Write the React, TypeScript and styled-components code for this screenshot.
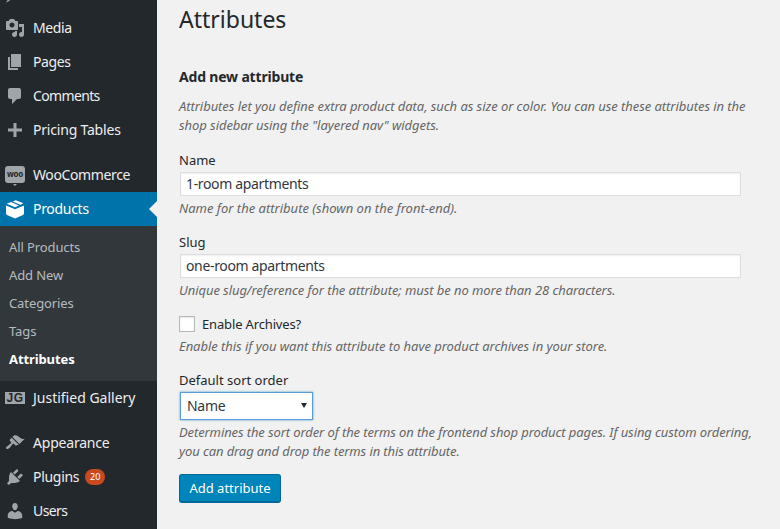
import React from "react";
import styled, { createGlobalStyle } from "styled-components";

const Global = createGlobalStyle`
  html, body { margin: 0; padding: 0; height: 100%; overflow: hidden; background: #f1f1f1; }
  body { font-family: "Noto Sans", sans-serif; font-size: 13px; color: #444; }
  * { box-sizing: border-box; }
`;

const Page = styled.div`
  display: flex;
  width: 780px;
  height: 529px;
  overflow: hidden;
`;
const Sidebar = styled.nav`
  flex: 0 0 157px;
  background: #23282d;
  height: 529px;
  overflow: hidden;
`;
const Menu = styled.ul`
  list-style: none;
  margin: -23px 0 0;
  padding: 0;
`;
const Item = styled.li<{ $active?: boolean; $gap?: boolean; $track?: number }>`
  position: relative;
  display: flex;
  align-items: center;
  height: 34px;
  margin-top: ${(p) => (p.$gap ? "11px" : "0")};
  background: ${(p) => (p.$active ? "#0073aa" : "transparent")};
  color: ${(p) => (p.$active ? "#fff" : "#eee")};
  font-size: 14px;
  line-height: 18px;
  letter-spacing: ${(p) => p.$track ?? -0.3}px;
`;
const IconSlot = styled.span<{ $active?: boolean }>`
  flex: 0 0 33px;
  display: flex;
  justify-content: center;
  padding-right: 3px;
  letter-spacing: 0;
  color: ${(p) => (p.$active ? "#fff" : "#a0a5aa")};
`;
const Pointer = styled.span`
  position: absolute;
  right: 0;
  top: 9px;
  border: 8px solid transparent;
  border-right-color: #f1f1f1;
  border-left-width: 0;
`;
const Badge = styled.span`
  display: inline-block;
  margin-left: 6px;
  min-width: 20px;
  height: 16px;
  padding: 0 4px;
  border-radius: 8px;
  background: #ca4a1f;
  color: #fff;
  font-size: 9px;
  line-height: 16px;
  letter-spacing: 0;
  text-align: center;
`;
const Sub = styled.ul`
  list-style: none;
  margin: 0;
  padding: 7px 0 8px;
  background: #32373c;
`;
const SubItem = styled.li<{ $current?: boolean }>`
  height: 28px;
  padding-left: 9px;
  font-size: 13px;
  line-height: 28px;
  letter-spacing: -0.1px;
  color: ${(p) => (p.$current ? "#fff" : "rgba(240,245,250,.7)")};
  font-weight: ${(p) => (p.$current ? 700 : 400)};
`;
const WooBubble = styled.span`
  position: relative;
  width: 20px;
  height: 17px;
  margin-top: -2px;
  border-radius: 3px;
  background: #a0a5aa;
  color: #23282d;
  font-size: 8px;
  font-weight: 700;
  line-height: 16px;
  text-align: center;
  letter-spacing: -0.3px;
  &::after {
    content: "";
    position: absolute;
    left: 8px;
    bottom: -3px;
    border: 2px solid transparent;
    border-top-color: #a0a5aa;
    border-bottom-width: 0;
  }
`;
const JgBox = styled.span`
  width: 20px;
  height: 12px;
  background: #a0a5aa;
  color: #23282d;
  font-family: "Liberation Sans", sans-serif;
  font-size: 12px;
  font-weight: 700;
  line-height: 12px;
  letter-spacing: 0.5px;
  text-align: center;
`;

const Main = styled.main`
  flex: 1;
  padding: 0 24px 0 22px;
  min-width: 0;
`;
const Title = styled.h1`
  margin: 5px 0 0;
  font-size: 23px;
  font-weight: 400;
  line-height: 29px;
  color: #23282d;
`;
const Section = styled.h2`
  margin: 33px 0 0;
  font-size: 14px;
  font-weight: 700;
  line-height: 19px;
  letter-spacing: -0.18px;
  color: #23282d;
`;
const Intro = styled.p`
  margin: 11px 0 0;
  font-style: italic;
  font-size: 13px;
  line-height: 19px;
  letter-spacing: -0.06px;
  color: #666;
`;
const Field = styled.div<{ $top: number }>`
  margin-top: ${(p) => p.$top}px;
`;
const Label = styled.label`
  display: block;
  height: 18px;
  font-size: 13px;
  line-height: 18px;
  color: #23282d;
`;
const TextInput = styled.input`
  display: block;
  width: 561px;
  height: 24px;
  margin: 3px 0 0 1px;
  padding: 0 5px 2px;
  border: 1px solid #ddd;
  background: #fff;
  color: #32373c;
  font: 14px/20px "Noto Sans", sans-serif;
  letter-spacing: -0.35px;
  box-shadow: inset 0 1px 2px rgba(0, 0, 0, 0.07);
  outline: 0;
`;
const Hint = styled.p<{ $track: number }>`
  margin: 3px 0 0;
  font-style: italic;
  font-size: 13px;
  line-height: 19px;
  letter-spacing: ${(p) => p.$track}px;
  color: #666;
`;
const CheckRow = styled.label`
  display: flex;
  align-items: center;
  gap: 7px;
  height: 18px;
  margin-bottom: 4px;
  font-size: 13px;
  letter-spacing: -0.15px;
  color: #23282d;
`;
const Check = styled.input`
  appearance: none;
  width: 16px;
  height: 16px;
  margin: 0;
  border: 1px solid #b4b9be;
  background: #fff;
  box-shadow: inset 0 1px 2px rgba(0, 0, 0, 0.1);
`;
const SelectWrap = styled.div`
  position: relative;
  width: 133px;
  margin: 3px 0 2px 1px;
  &::after {
    content: "";
    position: absolute;
    right: 6px;
    top: 11px;
    border-style: solid;
    border-width: 5px 3px 0;
    border-color: #23282d transparent transparent;
    pointer-events: none;
  }
`;
const Select = styled.select`
  appearance: none;
  display: block;
  width: 133px;
  height: 28px;
  padding: 2px 6px;
  border: 1px solid #5b9dd9;
  border-radius: 0;
  background: #fff;
  color: #32373c;
  font: 14px/20px "Noto Sans", sans-serif;
  letter-spacing: -0.3px;
  box-shadow: 0 0 2px rgba(30, 140, 190, 0.8);
  outline: 0;
`;
const Button = styled.button`
  display: block;
  width: 102px;
  height: 29px;
  margin: 13px 0 0;
  padding: 0;
  border: 1px solid #006799;
  border-bottom-width: 2px;
  border-radius: 3px;
  background: #0085ba;
  color: #fff;
  font: 13px/26px "Noto Sans", sans-serif;
`;

const Dash = ({ d, size = 20 }: { d: string; size?: number }) => (
  <svg width={size} height={size} viewBox="0 0 20 20" fill="currentColor" fillRule="evenodd">
    <path d={d} />
  </svg>
);

const icons = {
  post: "M10.44 3.02l1.82-1.82 6.36 6.35-1.83 1.82c-1.05-.68-2.48-.57-3.41.36l-.75.75c-.92.93-1.04 2.35-.35 3.41l-1.83 1.82-2.41-2.41-2.8 2.79c-.42.42-3.38 2.71-3.8 2.29s1.86-3.39 2.28-3.81l2.79-2.79L4.1 9.36l1.83-1.82c1.05.69 2.48.57 3.4-.36l.75-.75c.93-.92 1.05-2.35.36-3.41z",
  media: "M13 11V4c0-.55-.45-1-1-1h-1.67L9 1H5L3.67 3H2c-.55 0-1 .45-1 1v7c0 .55.45 1 1 1h10c.55 0 1-.45 1-1zM7 4.5c1.38 0 2.5 1.12 2.5 2.5S8.38 9.5 7 9.5 4.5 8.38 4.5 7 5.62 4.5 7 4.5zM14 6h5v10.5c0 1.38-1.12 2.5-2.5 2.5S14 17.88 14 16.5s1.12-2.5 2.5-2.5c.17 0 .34.02.5.05V9h-3V6zm-4 8.05V13h2v3.5c0 1.38-1.12 2.5-2.5 2.5S7 17.88 7 16.5 8.12 14 9.5 14c.17 0 .34.02.5.05z",
  page: "M6 15V2h10v13H6zm-1 1h8v2H3V5h2v11z",
  comments: "M5 2h9c1.1 0 2 .9 2 2v7c0 1.1-.9 2-2 2h-2l-5 5v-5H5c-1.1 0-2-.9-2-2V4c0-1.1.9-2 2-2z",
  plus: "M17 8.5v3h-5.5V17h-3v-5.5H3v-3h5.5V3h3v5.5z",
  box: "M10.8 1.2l7.6 3-3 1.5-7.8-3.2zM6.1 3.1l7.8 3.3L10 8.3 1.7 4.7zM1 6.4l9 3.8 9-3.8v8.2c0 .6-.4 1.1-1 1.4l-8 3.6L2 16c-.6-.3-1-.8-1-1.4z",
  appearance: "M14.48 11.06L7.41 3.99l1.5-1.5c.5-.56 2.3-.47 3.51.32 1.21.8 1.43 1.28 2.91 2.1 1.18.64 2.45 1.26 4.45.85zm-.71.71L6.7 4.7 4.93 6.47c-.39.39-.39 1.02 0 1.41l1.06 1.06c.39.39.39 1.03 0 1.42-.6.6-1.43 1.11-2.21 1.69-.35.26-.7.53-1.01.84C1.43 13.23.4 14.67 1.4 15.67c.99 1 2.44-.03 3.78-1.37.31-.31.58-.66.85-1.02.57-.78 1.08-1.61 1.69-2.21.39-.39 1.02-.39 1.41 0l1.06 1.06c.39.39 1.02.39 1.41 0z",
  plugins: "M13.11 4.36L9.87 7.6 8 5.73l3.24-3.24c.35-.34 1.05-.2 1.56.32.52.51.66 1.21.31 1.55zm-8 1.77l.91-1.12 9.01 9.01-1.19.84c-.71.71-2.63 1.16-3.82 1.16H6.14L4.9 17.26c-.59.59-1.54.59-2.12 0-.59-.58-.59-1.53 0-2.12l1.24-1.24v-3.88c0-1.13.4-3.19 1.09-3.89zm7.26 3.97l3.24-3.24c.34-.35 1.04-.21 1.55.31.52.51.66 1.21.31 1.55l-3.24 3.25z",
  users: "M10 9.25c-2.27 0-2.73-3.44-2.73-3.44C7 4.02 7.82 2 9.97 2c2.16 0 2.98 2.02 2.71 3.81 0 0-.41 3.44-2.68 3.44zm0 2.57L12.72 10c2.39 0 4.52 2.33 4.52 4.53v2.49s-3.65 1.13-7.24 1.13c-3.65 0-7.24-1.13-7.24-1.13v-2.49c0-2.25 1.94-4.48 4.47-4.48z",
};

export default function App() {
  return (
    <Page>
      <Global />
      <Sidebar>
        <Menu>
          <Item><IconSlot><Dash d={icons.post} /></IconSlot></Item>
          <Item $track={-0.4}><IconSlot><Dash d={icons.media} /></IconSlot>Media</Item>
          <Item $track={-0.4}><IconSlot><Dash d={icons.page} /></IconSlot>Pages</Item>
          <Item $track={-0.65}><IconSlot><Dash d={icons.comments} /></IconSlot>Comments</Item>
          <Item $track={-0.2}><IconSlot><Dash d={icons.plus} /></IconSlot>Pricing Tables</Item>
          <Item $gap $track={-0.38}><IconSlot><WooBubble>woo</WooBubble></IconSlot>WooCommerce</Item>
          <Item $active><IconSlot $active><Dash d={icons.box} /></IconSlot>Products<Pointer /></Item>
          <Sub>
            <SubItem>All Products</SubItem>
            <SubItem>Add New</SubItem>
            <SubItem>Categories</SubItem>
            <SubItem>Tags</SubItem>
            <SubItem $current>Attributes</SubItem>
          </Sub>
          <Item $track={0}><IconSlot><JgBox>JG</JgBox></IconSlot>Justified Gallery</Item>
          <Item $gap $track={-0.2}><IconSlot><Dash d={icons.appearance} /></IconSlot>Appearance</Item>
          <Item><IconSlot><Dash d={icons.plugins} /></IconSlot>Plugins<Badge>20</Badge></Item>
          <Item $track={-0.6}><IconSlot><Dash d={icons.users} /></IconSlot>Users</Item>
        </Menu>
      </Sidebar>
      <Main>
        <Title>Attributes</Title>
        <Section>Add new attribute</Section>
        <Intro>
          Attributes let you define extra product data, such as size or color. You can use these attributes in the shop sidebar using the "layered nav" widgets.
        </Intro>
        <Field $top={16}>
          <Label>Name</Label>
          <TextInput defaultValue="1-room apartments" />
          <Hint $track={0}>Name for the attribute (shown on the front-end).</Hint>
        </Field>
        <Field $top={15}>
          <Label>Slug</Label>
          <TextInput defaultValue="one-room apartments" />
          <Hint $track={-0.07}>Unique slug/reference for the attribute; must be no more than 28 characters.</Hint>
        </Field>
        <Field $top={15}>
          <CheckRow><Check type="checkbox" />Enable Archives?</CheckRow>
          <Hint $track={-0.05}>Enable this if you want this attribute to have product archives in your store.</Hint>
        </Field>
        <Field $top={15}>
          <Label>Default sort order</Label>
          <SelectWrap>
            <Select defaultValue="Name"><option>Name</option></Select>
          </SelectWrap>
          <Hint $track={-0.105}>Determines the sort order of the terms on the frontend shop product pages. If using custom ordering, you can drag and drop the terms in this attribute.</Hint>
        </Field>
        <Button>Add attribute</Button>
      </Main>
    </Page>
  );
}
